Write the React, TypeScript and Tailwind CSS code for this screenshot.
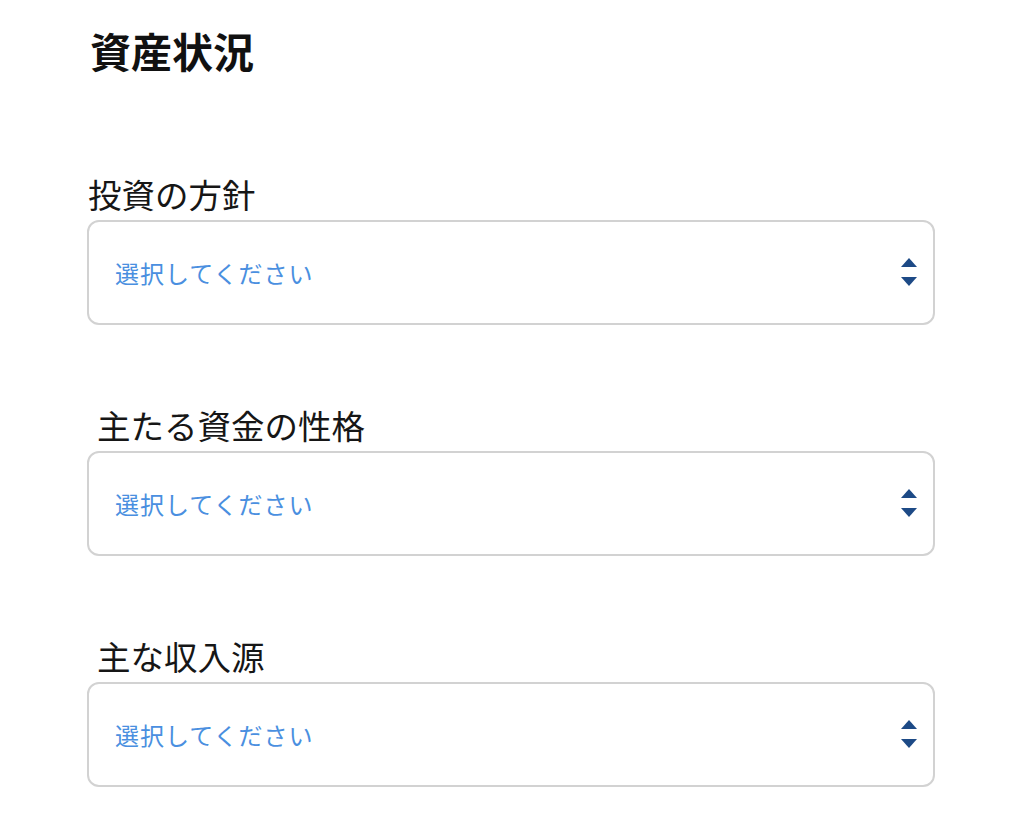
const fields = [
  { label: '投資の方針', indent: false },
  { label: '主たる資金の性格', indent: true },
  { label: '主な収入源', indent: true },
];

const SortIcon = () => (
  <svg width="16" height="29" viewBox="0 0 16 29" className="shrink-0">
    <path d="M8 0 L16 9 H0 Z" fill="#1d4a86" />
    <path d="M0 19 H16 L8 28 Z" fill="#1d4a86" />
  </svg>
);

const SelectField = ({ label, indent }: { label: string; indent: boolean }) => (
  <div className="flex flex-col">
    <label
      className={`text-[33.5px] leading-[40px] text-[#161616] ${indent ? 'pl-[10px]' : 'pl-px'}`}
    >
      {label}
    </label>
    <div className="mt-[6px] flex h-[105px] items-center justify-between rounded-[12px] border-2 border-[#d2d2d2] bg-white pl-[26px] pr-[16px]">
      <span className="text-[24px] tracking-[1px] text-[#4a8fe0]">選択してください</span>
      <SortIcon />
    </div>
  </div>
);

export default function App() {
  return (
    <div
      className="min-h-screen w-full bg-white"
      style={{ fontFamily: '"Noto Sans CJK JP", "Noto Sans", sans-serif' }}
    >
      <div className="ml-[87px] w-[848px] pt-[25px]">
        <h1 className="pl-[3px] text-[41px] font-bold leading-[50px] text-[#111]">資産状況</h1>
        <div className="mt-[99px] flex flex-col gap-[80px]">
          {fields.map((f) => (
            <SelectField key={f.label} label={f.label} indent={f.indent} />
          ))}
        </div>
      </div>
    </div>
  );
}
